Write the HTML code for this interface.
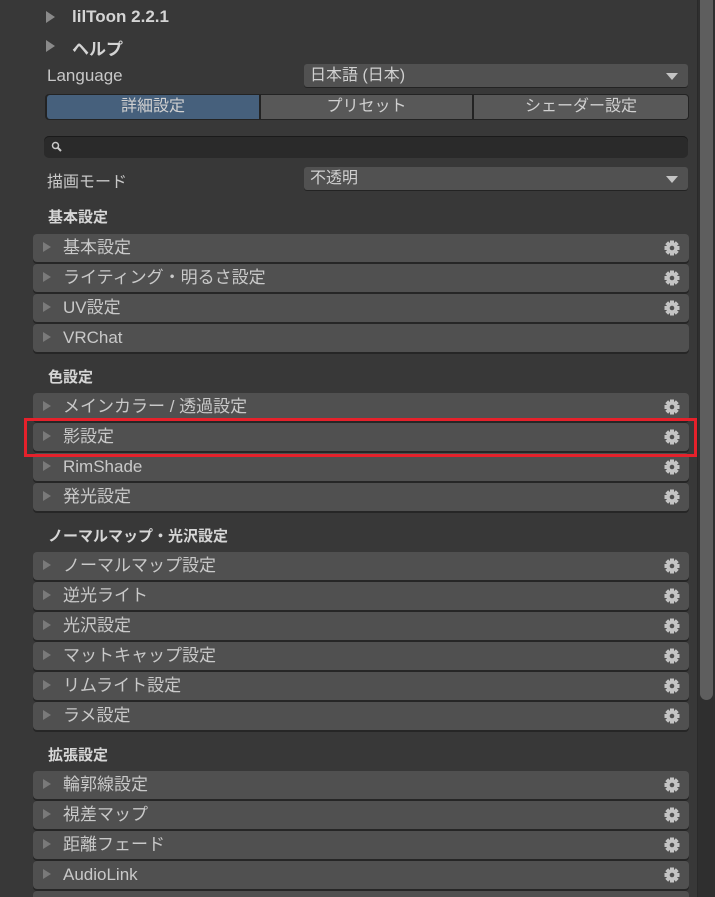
<!DOCTYPE html><html style="overflow:hidden;height:897px"><head><meta charset="utf-8"><style>
body{margin:0;width:715px;height:897px;background:#383838;overflow:hidden;position:relative;font-family:"Liberation Sans","Noto Sans CJK JP",sans-serif;color:#c8c8c8}
.a{position:absolute}
.tri{position:absolute;width:0;height:0;border-left:9px solid #8a8a8a;border-top:6px solid transparent;border-bottom:6px solid transparent}
.row{position:absolute;left:33px;width:656px;height:28px;background:#505050;border-radius:4px;box-shadow:0 2px 0 #262626}
.row .tri{left:10px;top:8px;border-left-color:#7a7a7a;border-left-width:8px;border-top-width:5.5px;border-bottom-width:5.5px}
.row span{position:absolute;left:30px;top:4px;font-size:17px;color:#c9c9c9;line-height:20px}
.row svg{position:absolute;left:631px;top:6px}
.h{position:absolute;left:48px;font-size:15px;font-weight:bold;color:#d6d6d6;line-height:20px}
.dd{position:absolute;left:304px;width:384px;height:23px;background:#515151;border-radius:3px;box-shadow:0 1px 0 #232323}
.dd span{position:absolute;left:6px;top:2px;font-size:16px;line-height:20px;color:#d0d0d0}
.dd i{position:absolute;right:10px;top:9px;border-top:7px solid #c4c4c4;border-left:6px solid transparent;border-right:6px solid transparent}
.tab{position:absolute;top:95px;height:24px;background:#585858;font-size:16px;line-height:24px;text-align:center;color:#d0d0d0}
</style></head><body>
<div class="tri" style="left:46px;top:11px"></div>
<div class="a" style="left:72px;top:7px;font-size:17px;font-weight:bold;color:#d4d4d4">lilToon 2.2.1</div>
<div class="tri" style="left:46px;top:40px"></div>
<div class="a" style="left:72px;top:35px;font-size:17px;font-weight:bold;color:#d4d4d4">ヘルプ</div>
<div class="a" style="left:47px;top:66px;font-size:17px;color:#c8c8c8">Language</div>
<div class="dd" style="top:64px"><span>日本語 (日本)</span><i></i></div>
<div class="a" style="left:45px;top:94px;width:644px;height:26px;background:#232323;border-radius:4px"></div>
<div class="tab" style="left:47px;width:212px;background:#46607c;border-radius:3px 0 0 3px">詳細設定</div>
<div class="tab" style="left:261px;width:211px">プリセット</div>
<div class="tab" style="left:474px;width:214px;border-radius:0 3px 3px 0">シェーダー設定</div>
<div class="a" style="left:44px;top:136px;width:644px;height:22px;background:#2a2a2a;border-radius:5px;box-shadow:inset 0 1px 0 #1a1a1a"></div>
<svg class="a" style="left:51px;top:141px" width="12" height="12"><circle cx="4.5" cy="4.5" r="3" fill="none" stroke="#c8c8c8" stroke-width="1.5"/><line x1="6.5" y1="6.5" x2="10" y2="10" stroke="#c8c8c8" stroke-width="2"/></svg>
<div class="a" style="left:47px;top:168px;font-size:16px;color:#c8c8c8">描画モード</div>
<div class="dd" style="top:167px"><span>不透明</span><i></i></div>
<div class="a" style="left:697px;top:0;width:18px;height:897px;background:#2f2f2f;border-left:1px solid #2a2a2a"></div>
<div class="a" style="left:700px;top:0;width:13px;height:700px;background:#5e5e5e;border-radius:0 0 7px 7px"></div>
<div id="c"></div>
<div class="a" style="left:24px;top:418px;width:667px;height:33px;border:3px solid #e5212b"></div>
<script>
var g='<svg width="16" height="16" viewBox="0 0 16 16"><g fill="#c4c4c4"><rect x="6" y="0.5" width="4" height="15"/><rect x="0.5" y="6" width="15" height="4"/><rect x="6" y="0.5" width="4" height="15" transform="rotate(45 8 8)"/><rect x="6" y="0.5" width="4" height="15" transform="rotate(-45 8 8)"/><circle cx="8" cy="8" r="5.5"/></g><circle cx="8" cy="8" r="2.3" fill="#505050"/></svg>';
var h=[["基本設定",208],["色設定",368],["ノーマルマップ・光沢設定",527],["拡張設定",746]];
var r=[["基本設定",234,1],["ライティング・明るさ設定",264,1],["UV設定",294,1],["VRChat",324,0],
["メインカラー / 透過設定",393,1],["影設定",423,1],["RimShade",453,1],["発光設定",483,1],
["ノーマルマップ設定",552,1],["逆光ライト",582,1],["光沢設定",612,1],["マットキャップ設定",642,1],["リムライト設定",672,1],["ラメ設定",702,1],
["輪郭線設定",771,1],["視差マップ",801,1],["距離フェード",831,1],["AudioLink",861,1]];
var s='';h.forEach(function(x){s+='<div class="h" style="top:'+x[1]+'px">'+x[0]+'</div>'});
r.forEach(function(x){s+='<div class="row" style="top:'+x[1]+'px"><div class="tri"></div><span>'+x[0]+'</span>'+(x[2]?g:'')+'</div>'});
s+='<div class="a" style="left:33px;top:891px;width:656px;height:6px;background:#505050;border-radius:4px 4px 0 0"></div>';
document.getElementById('c').innerHTML=s;
</script>
</body></html>
